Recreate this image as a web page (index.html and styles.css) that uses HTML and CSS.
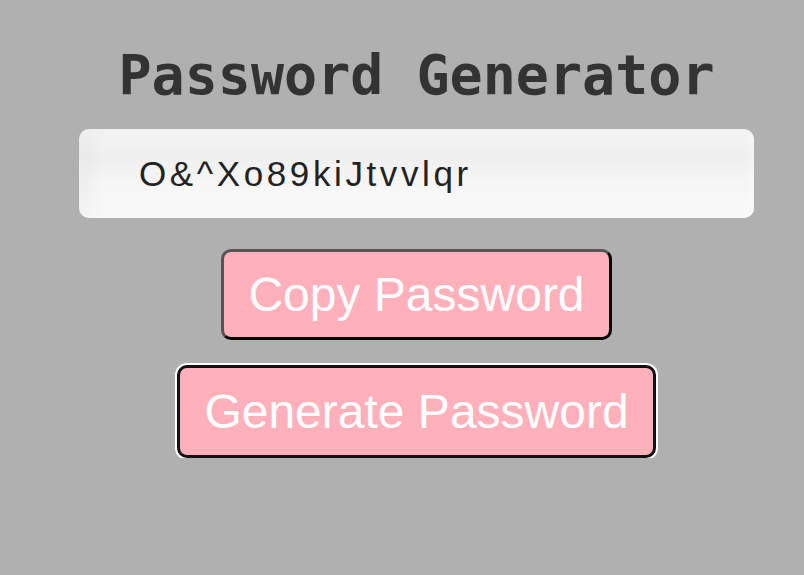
FILE: index.html
```html
<!DOCTYPE html>
<html lang="en">
<head>
    <meta charset="UTF-8">
    <meta name="viewport" content="width=device-width, initial-scale=1.0">
    <title>Password Generator</title>
    <link rel="stylesheet" href="styles.css">
</head>
<body>
    <main class="generator">
        <h1 class="title">Password Generator</h1>
        <div class="output">
            <span class="password">O&amp;^Xo89kiJtvvlqr</span>
        </div>
        <button class="btn btn-copy">Copy Password</button>
        <button class="btn btn-generate">Generate Password</button>
    </main>
</body>
</html>
```

FILE: styles.css
```css
body {
    margin: 0;
    background-color: #b0b0b0;
    font-family: "Liberation Sans", Arial, sans-serif;
}
.generator {
    width: 675px;
    margin-left: 79px;
    display: flex;
    flex-direction: column;
    align-items: center;
}
.title {
    font-family: "DejaVu Sans Mono", monospace;
    font-size: 55px;
    font-weight: bold;
    color: #333;
    margin: 40px 0 0;
    line-height: 70px;
}
.output {
    align-self: stretch;
    box-sizing: border-box;
    height: 89px;
    margin-top: 19px;
    padding-left: 60px;
    display: flex;
    align-items: center;
    border-radius: 10px;
    background: linear-gradient(180deg, #f6f6f6, #efefef 30%, #f7f7f7 70%, #f8f8f8);
    box-shadow: inset 12px 0 18px rgba(0, 0, 0, 0.04), inset 0 -8px 14px rgba(255, 255, 255, 0.6);
}
.password {
    font-size: 35px;
    letter-spacing: 3.6px;
    color: #222;
}
.btn {
    font-family: "Liberation Sans", Arial, sans-serif;
    font-size: 48px;
    line-height: 55px;
    color: #fff;
    background-color: #ffb0bb;
    border-radius: 10px;
    cursor: pointer;
}
.btn-copy {
    margin-top: 31px;
    padding: 15px 24px;
    border: 3px solid;
    border-color: #555 #000 #000 #555;
}
.btn-generate {
    margin-top: 25px;
    padding: 16px 24px;
    border: 3px solid #111;
    box-shadow: 0 0 0 2px #fff;
}
```
